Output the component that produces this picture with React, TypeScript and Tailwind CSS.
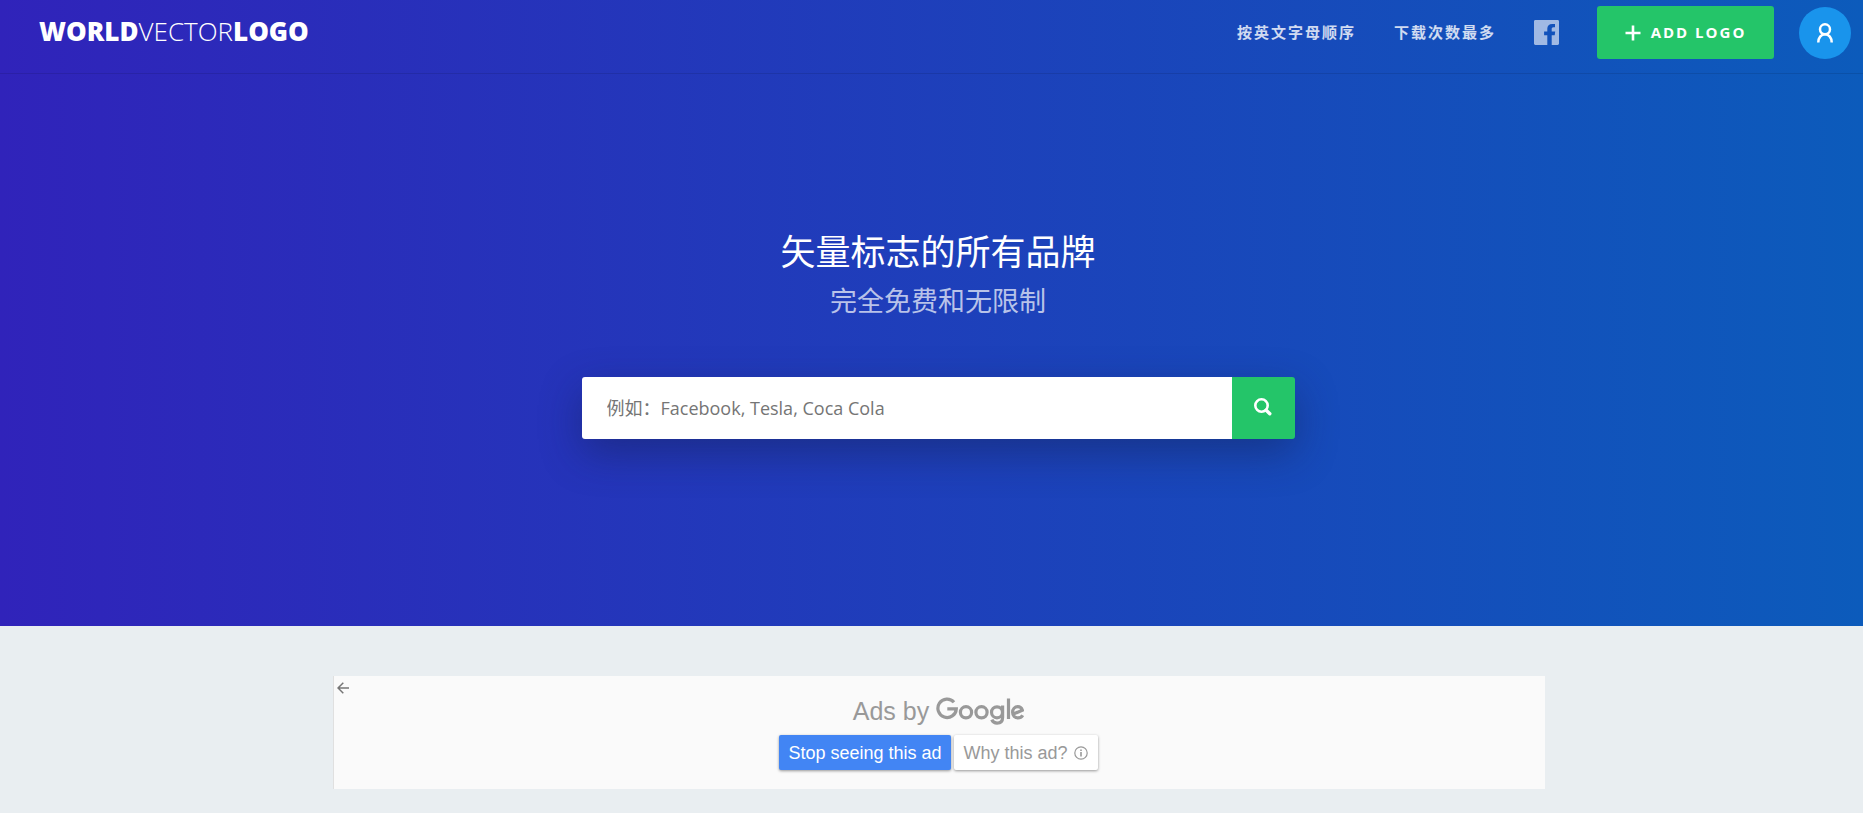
import { useState } from 'react';

const navLinks = [
  { label: '按英文字母顺序', href: '#alphabetical' },
  { label: '下载次数最多', href: '#most-downloaded' },
];

const Logo = () => (
  <a href="#home" aria-label="Worldvectorlogo" className="pb-1 text-[26px] leading-8 text-white">
    <span className="font-extrabold">WORLD</span>
    <span className="font-light">VECTOR</span>
    <span className="font-extrabold">LOGO</span>
  </a>
);

const FacebookIcon = () => (
  <svg viewBox="0 0 25 25" className="h-[25px] w-[25px]" fill="currentColor" aria-hidden="true">
    <path d="M1.4 0h22.2c.8 0 1.4.6 1.4 1.4v22.2c0 .8-.6 1.4-1.4 1.4h-5.900v-9.700h3l.5-3.800h-3.500V9.100c0-1.100.3-1.800 1.900-1.800H21V4c-.3 0-1.500-.1-2.900-.1-2.900 0-4.800 1.700-4.800 4.900v2.700h-3.200v3.800h3.200V25H1.400C.6 25 0 24.400 0 23.600V1.400C0 .6.6 0 1.400 0z" />
  </svg>
);

const PlusIcon = () => (
  <svg viewBox="0 0 16 16" className="h-4 w-4" fill="none" stroke="currentColor" strokeWidth="2.6" aria-hidden="true">
    <path d="M8 .5v15M.5 8h15" />
  </svg>
);

const UserIcon = () => (
  <svg viewBox="0 0 16 20" className="h-5 w-4" fill="none" stroke="currentColor" strokeWidth="2.5" aria-hidden="true">
    <circle cx="8" cy="6.300" r="5" />
    <path d="M1.300 19.500c0-4.800 2.700-8.200 6.700-8.200s6.700 3.400 6.700 8.200" />
  </svg>
);

const SearchIcon = () => (
  <svg viewBox="0 0 18 18" className="h-[18px] w-[18px]" fill="none" stroke="currentColor" aria-hidden="true">
    <circle cx="7.500" cy="7.500" r="6.200" strokeWidth="2.600" />
    <path d="M12.200 12.200l3.600 3.600" strokeWidth="3.400" strokeLinecap="round" />
  </svg>
);

const ArrowIcon = () => (
  <svg viewBox="0 0 12 12" className="h-3 w-3" fill="none" stroke="currentColor" strokeWidth="1.5" aria-hidden="true">
    <path d="M12 6H1.200M6.300.7L1 6l5.300 5.300" />
  </svg>
);

const InfoIcon = () => (
  <svg viewBox="0 0 14 14" className="h-[14px] w-[14px]" fill="none" stroke="currentColor" aria-hidden="true">
    <circle cx="7" cy="7" r="6.200" strokeWidth="1.200" />
    <path d="M7 6v4.500M7 3.400v1.500" strokeWidth="1.600" />
  </svg>
);

const GoogleWordmark = () => (
  <svg viewBox="0 0 88 28" className="h-7 w-[88px]" fill="none" stroke="currentColor" strokeWidth="3.200" role="img" aria-label="Google">
    <path d="M18 5.200A9.200 9.200 0 1 0 20.300 11.800H11.300" />
    <circle cx="30" cy="15.300" r="5.600" />
    <circle cx="45.500" cy="15.300" r="5.600" />
    <circle cx="61" cy="15.300" r="5.500" />
    <path d="M66.600 8.500v12c0 3.800-2.300 5.600-5.500 5.600-2.600 0-4.500-1.400-5.300-3.400" />
    <path d="M72.500 1.500v20.500" />
    <path d="M76.800 17.300l9.600-4.100c-.8-2.200-2.400-3.500-4.600-3.500-3 0-5.200 2.400-5.200 5.600 0 3.300 2.300 5.600 5.400 5.600 2.100 0 3.700-1 4.700-2.600" />
  </svg>
);

const Header = () => (
  <header className="flex h-[74px] items-start justify-between border-b border-black/10 pt-[6px] pr-3 pl-[39px]">
    <div className="flex h-[53px] items-center">
      <Logo />
    </div>
    <nav className="flex h-[53px] items-center">
      {navLinks.map((link) => (
        <a key={link.href} href={link.href} className="mr-[38px] text-[15px] font-bold tracking-[2px] text-white/80">
          {link.label}
        </a>
      ))}
      <a href="#facebook" aria-label="Facebook" className="mr-[38px] text-white/60">
        <FacebookIcon />
      </a>
      <button type="button" className="mr-[25px] flex h-[53px] w-[177px] items-center justify-center gap-[10px] rounded-[3px] bg-[#24c569] text-[15px] font-bold tracking-[2px] text-white">
        <PlusIcon />
        ADD LOGO
      </button>
      <button type="button" aria-label="Account" className="flex h-[52px] w-[52px] items-center justify-center rounded-full bg-[#1994ec] text-white">
        <UserIcon />
      </button>
    </nav>
  </header>
);

const SearchForm = () => {
  const [query, setQuery] = useState('');

  return (
    <form
      onSubmit={(e) => e.preventDefault()}
      className="mt-[54px] flex h-[62px] w-full max-w-[713px] overflow-hidden rounded-[3px] shadow-[0_14px_40px_rgba(20,30,80,0.45)]"
    >
      <input
        type="text"
        aria-label="Search logos"
        value={query}
        onChange={(e) => setQuery(e.target.value)}
        placeholder="例如：Facebook, Tesla, Coca Cola"
        className="min-w-0 flex-1 bg-white px-[25px] text-lg text-gray-700 outline-none placeholder:text-[#757575]"
      />
      <button type="submit" aria-label="Search" className="flex w-[63px] items-center justify-center bg-[#24c569] pb-[3px] text-white">
        <SearchIcon />
      </button>
    </form>
  );
};

const AdPanel = () => (
  <aside className="flex w-full max-w-[1212px] items-start border-l border-[#e0e0e0] bg-[#fafafa] font-['Liberation_Sans',Arial,sans-serif]">
    <button type="button" aria-label="Back" className="mt-[6px] ml-[3px] text-[#757575]">
      <ArrowIcon />
    </button>
    <div className="flex flex-1 flex-col items-center pt-[21px] pr-4 pb-[19px]">
      <div className="flex items-center gap-[7px] text-[25px] leading-7 text-[#999999]">
        <span>Ads by</span>
        <GoogleWordmark />
      </div>
      <div className="mt-[10px] flex gap-[3px]">
        <button type="button" className="h-[35px] rounded-[2px] bg-[#4285f4] px-[9px] text-lg text-white shadow-[0_1px_3px_rgba(0,0,0,0.4)]">
          Stop seeing this ad
        </button>
        <button type="button" className="flex h-[35px] items-center gap-[6px] rounded-[2px] bg-white px-[10px] text-lg text-[#999999] shadow-[0_1px_3px_rgba(0,0,0,0.4)]">
          Why this ad?
          <InfoIcon />
        </button>
      </div>
    </div>
  </aside>
);

const App = () => (
  <div className="min-h-screen bg-[#e9eef1] font-['Open_Sans','Noto_Sans_CJK_SC',sans-serif]">
    <div className="bg-linear-to-r/srgb from-[#3023ba] to-[#0c5bbb]">
      <Header />
      <section className="flex flex-col items-center pt-[152px] pb-[187px] pl-[13px]">
        <h1 className="text-[35px] leading-[52px] text-white">矢量标志的所有品牌</h1>
        <p className="text-[27px] leading-[45px] text-white/70">完全免费和无限制</p>
        <SearchForm />
      </section>
    </div>
    <main className="flex flex-col items-center pt-[50px] pb-6 pl-[14px]">
      <AdPanel />
    </main>
  </div>
);

export default App;
